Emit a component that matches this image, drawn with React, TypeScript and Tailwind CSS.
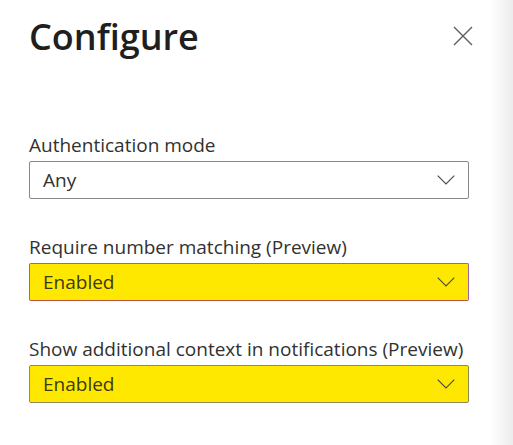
import React from "react";

function Chevron() {
  return (
    <svg width="18" height="10" viewBox="0 0 18 10" fill="none" className="shrink-0">
      <path d="M0.7 0.7 L9 9 L17.3 0.7" stroke="#4a4844" strokeWidth="1.1" />
    </svg>
  );
}

function Select({ value, variant }: { value: string; variant: "plain" | "purple" | "gray" }) {
  const cls =
    variant === "plain"
      ? "bg-white border-[#8a8886] text-[#323130]"
      : variant === "purple"
      ? "bg-[#ffe800] border-[#a15fa5] border-b-[#b5533c] text-[#3a3a1a]"
      : "bg-[#ffe800] border-[#8f8a5a] text-[#3a3a1a]";
  return (
    <div className={`flex h-[38px] items-center justify-between rounded-[2px] border pl-[13px] pr-[13px] ${cls}`}>
      <span className="text-[19px] leading-none">{value}</span>
      <Chevron />
    </div>
  );
}

function Field({ label, value, variant }: { label: string; value: string; variant: "plain" | "purple" | "gray" }) {
  return (
    <div className="flex flex-col">
      <label className="mb-[5px] whitespace-nowrap text-[19px] leading-[22px] text-[#323130]">{label}</label>
      <Select value={value} variant={variant} />
    </div>
  );
}

export default function App() {
  return (
    <div
      className="relative flex h-[445px] w-[513px] overflow-hidden bg-white"
      style={{ fontFamily: '"Open Sans", "Noto Sans", sans-serif' }}
    >
      <div className="w-[490px] pl-[29px] pr-[21px]">
        <div className="flex items-start justify-between pt-[13px]">
          <h1 className="text-[36px] font-semibold leading-[48px] text-[#201f1e]">Configure</h1>
          <svg width="20" height="20" viewBox="0 0 20 20" className="mr-[-4px] mt-[13px]">
            <path d="M1 1 L19 19 M19 1 L1 19" stroke="#605e5c" strokeWidth="1.4" />
          </svg>
        </div>
        <div className="mt-[73px] flex flex-col gap-[37px]">
          <Field label="Authentication mode" value="Any" variant="plain" />
          <Field label="Require number matching (Preview)" value="Enabled" variant="purple" />
          <Field label="Show additional context in notifications (Preview)" value="Enabled" variant="gray" />
        </div>
      </div>
      <div className="h-full flex-1 bg-gradient-to-r from-white to-[#ececec]" />
    </div>
  );
}
